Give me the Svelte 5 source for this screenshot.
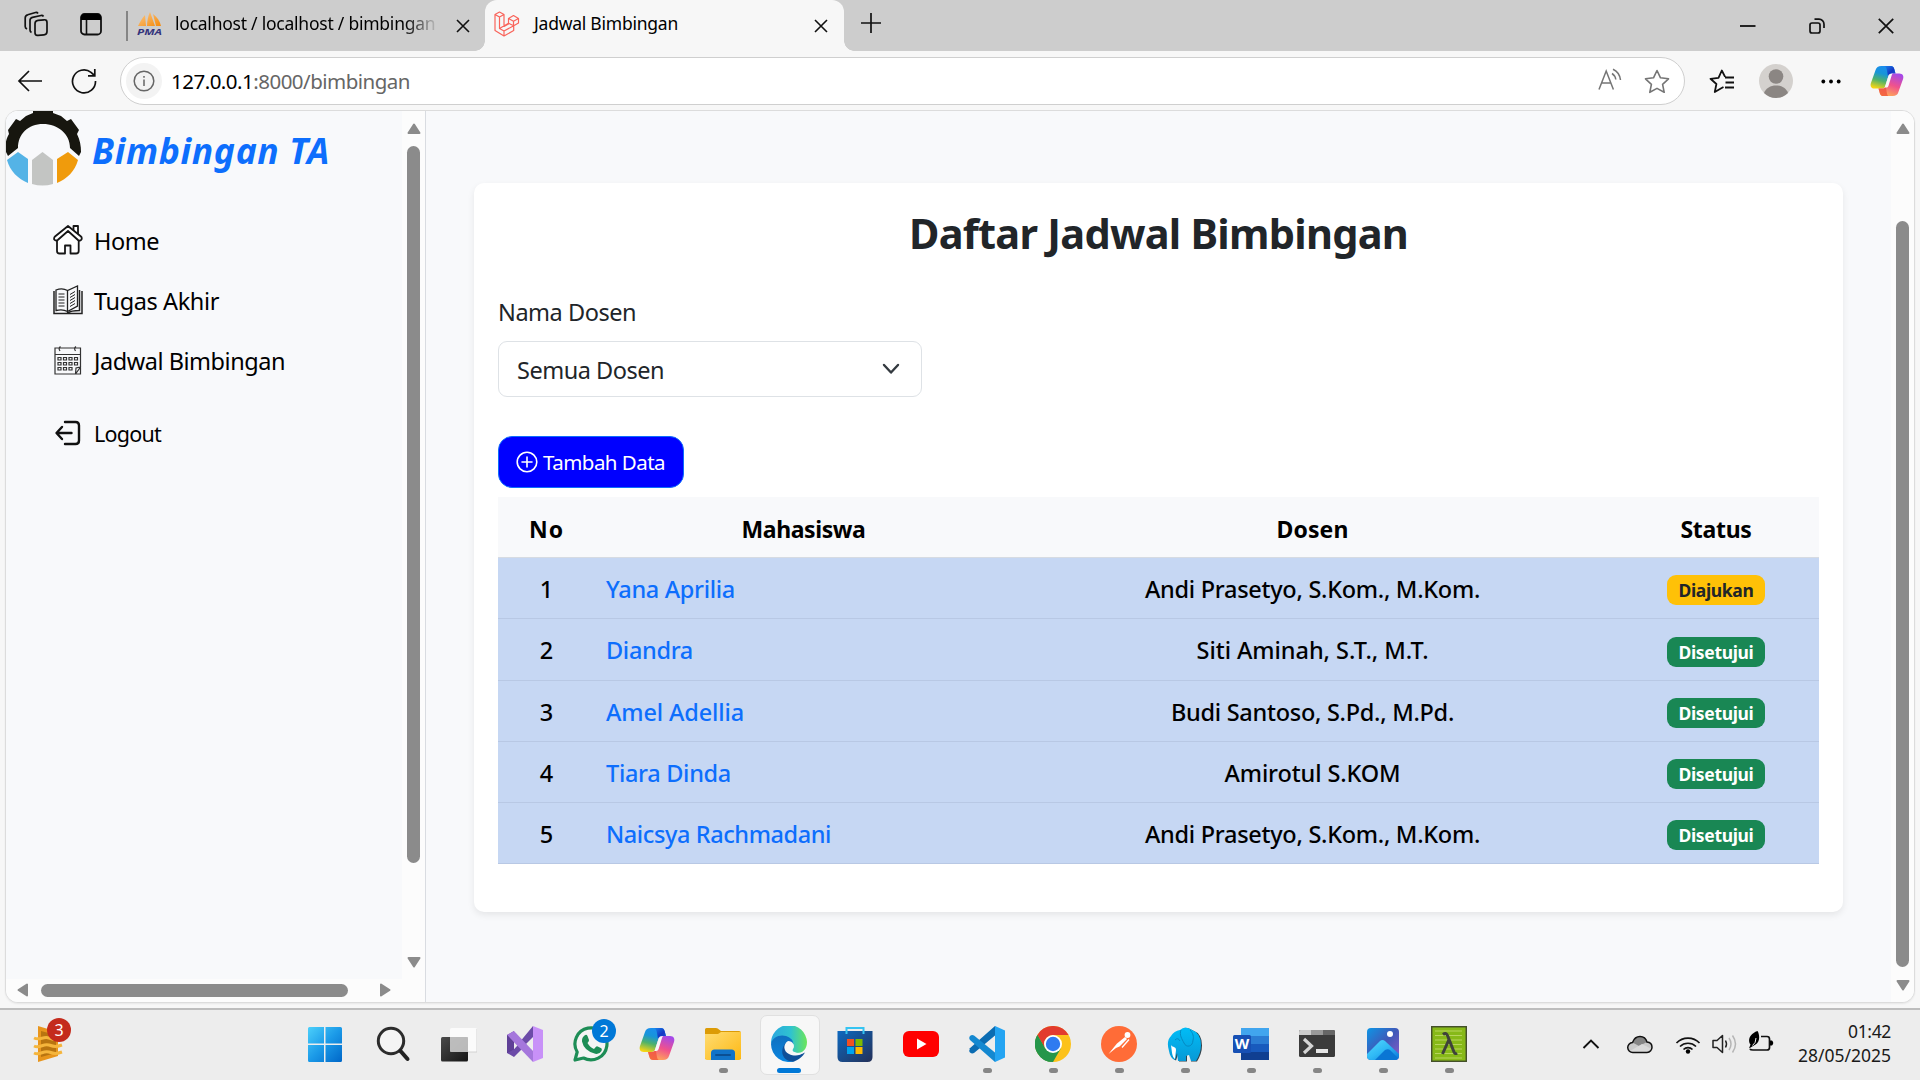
<script>
  const rows = [
    { no: 1, name: 'Yana Aprilia', nw: 129, dosen: 'Andi Prasetyo, S.Kom., M.Kom.', dw: 335, ok: false },
    { no: 2, name: 'Diandra', nw: 87, dosen: 'Siti Aminah, S.T., M.T.', dw: 232, ok: true },
    { no: 3, name: 'Amel Adellia', nw: 138, dosen: 'Budi Santoso, S.Pd., M.Pd.', dw: 283, ok: true },
    { no: 4, name: 'Tiara Dinda', nw: 125, dosen: 'Amirotul S.KOM', dw: 176, ok: true },
    { no: 5, name: 'Naicsya Rachmadani', nw: 225, dosen: 'Andi Prasetyo, S.Kom., M.Kom.', dw: 335, ok: true }
  ];

  const apps = [
    'start', 'search', 'tasks', 'vs', 'whatsapp', 'copilot', 'files', 'edge', 'store',
    'youtube', 'vscode', 'chrome', 'postman', 'elephant', 'word', 'terminal', 'photos', 'lambda'
  ];
  const running = new Set(['files', 'edge', 'vscode', 'chrome', 'postman', 'elephant', 'word', 'terminal', 'photos', 'lambda']);

  // Tracks a line of text so that it takes up the given width.
  function fit(node, width) {
    const n = node.textContent.length;
    const natural = node.getBoundingClientRect().width;
    node.style.letterSpacing = `${(width - natural) / n}px`;
  }
</script>

{#snippet copilot(size)}
  <svg width={size} height={size} viewBox="0 0 36 36">
    <path d="M12 2h10c2 0 3 1 3.600 3l1.400 5h-4c-2 0-3 1-3.600 3l-3 10c-.8 2.200-2 3-4 3H5c-4 0-5-3-4-6L6 6c.8-2.600 2.600-4 6-4z" fill="url(#cpA)" />
    <path d="M17 2h5c2 0 3 1 3.600 3l1.400 5h-4c-2.500 0-3.500 1-4 3l-1-6c-.4-3-1.400-5-4-5z" fill="url(#cpC)" />
    <path d="M24 34H14c-2 0-3-1-3.600-3L9 26h4c2 0 3-1 3.600-3l3-10c.8-2.200 2-3 4-3H31c4 0 5 3 4 6l-5 14c-.8 2.600-2.600 4-6 4z" fill="url(#cpB)" />
    <path d="M9 26h4c2 0 3-1 3.600-3l1 6c.4 3 1 5 3 5h-6.600c-2 0-3-1-3.600-3z" fill="#f0503c" opacity=".75" />
    <path d="M19.600 12.500L15.500 25h1.700q1.800 0 2.400-2L23 12q.3-1.200 1.200-2-3.600 0-4.600 2.500z" fill="#f8f8f8" />
  </svg>
{/snippet}

{#snippet tabClose()}
  <svg width="14" height="14" viewBox="0 0 14 14"><path d="M1 1l12 12M13 1L1 13" class="k" stroke-width="1.600" /></svg>
{/snippet}

{#snippet arrow(dir)}
  <svg class="arrow {dir}" width="14" height="12" viewBox="0 0 14 12"><path d="M7 1.500L12.500 10H1.500z" fill="#8b8b8b" stroke="#8b8b8b" stroke-width="2" stroke-linejoin="round" /></svg>
{/snippet}

<svg class="defs" width="0" height="0">
  <defs>
    <linearGradient id="cpA" x1=".6" y1="0" x2=".3" y2="1"><stop offset="0" stop-color="#1b8df0" /><stop offset=".35" stop-color="#1795d8" /><stop offset=".65" stop-color="#4fb26a" /><stop offset="1" stop-color="#f5d514" /></linearGradient>
    <linearGradient id="cpB" x1=".7" y1="0" x2=".3" y2="1"><stop offset="0" stop-color="#a548e8" /><stop offset=".5" stop-color="#f0528c" /><stop offset="1" stop-color="#ffae54" /></linearGradient>
    <linearGradient id="cpC" x1="0" y1="0" x2="1" y2="1"><stop offset="0" stop-color="#1b8df0" /><stop offset=".6" stop-color="#1437c4" /><stop offset="1" stop-color="#2057d8" /></linearGradient>
    <linearGradient id="win" x1="0" y1="0" x2="1" y2="1"><stop offset="0" stop-color="#4cd0fb" /><stop offset=".5" stop-color="#1b9ae8" /><stop offset="1" stop-color="#0067c8" /></linearGradient>
    <linearGradient id="dark" x1="0" y1="0" x2="1" y2="1"><stop offset="0" stop-color="#4a4a4a" /><stop offset="1" stop-color="#151515" /></linearGradient>
    <linearGradient id="fold" x1="0" y1="0" x2="1" y2="1"><stop offset="0" stop-color="#ffdc72" /><stop offset="1" stop-color="#fdb813" /></linearGradient>
    <linearGradient id="edA" x1="0" y1=".3" x2="1" y2=".3"><stop offset="0" stop-color="#2aa7e0" /><stop offset=".55" stop-color="#2fc3cf" /><stop offset="1" stop-color="#6ce65a" /></linearGradient>
    <linearGradient id="edB" x1="0" y1="0" x2="0" y2="1"><stop offset="0" stop-color="#0f6fbf" /><stop offset="1" stop-color="#0b86e0" /></linearGradient>
    <linearGradient id="bag" x1="0" y1="0" x2="1" y2="1"><stop offset="0" stop-color="#0d69c0" /><stop offset="1" stop-color="#243058" /></linearGradient>
    <linearGradient id="eleph" x1="0" y1="0" x2="0" y2="1"><stop offset="0" stop-color="#00bdf7" /><stop offset="1" stop-color="#0899d6" /></linearGradient>
    <linearGradient id="phA" x1="0" y1="0" x2="1" y2="1"><stop offset="0" stop-color="#0d96e6" /><stop offset=".5" stop-color="#4058b8" /><stop offset="1" stop-color="#8d5ac8" /></linearGradient>
    <linearGradient id="phB" x1="0" y1="0" x2="1" y2="1"><stop offset="0" stop-color="#56d9ff" /><stop offset=".5" stop-color="#2fb8f5" /><stop offset="1" stop-color="#0a74d8" /></linearGradient>
    <linearGradient id="pma" x1="0" y1="0" x2="1" y2="1"><stop offset="0" stop-color="#fbc98a" /><stop offset="1" stop-color="#f58a0b" /></linearGradient>
  </defs>
</svg>

<div class="screen">
  <header class="tabs">
    <div class="lead">
      <svg width="26" height="26" viewBox="0 0 26 26" class="ln" stroke-width="1.700">
        <rect x="12" y="9" width="12" height="15" rx="3" transform="skewY(-6) translate(0 2)" />
        <path d="M8.500 21.500c-1-.5-1.500-1.300-1.500-2.500V9.500c0-1.800.8-2.800 2.500-3.200L18 4.500c1-.2 2 .2 2.500 1" />
        <path d="M4 18c-1-.5-1.800-1.300-1.800-2.500V7c0-1.800.8-2.800 2.500-3.200L12.500 1.500c1-.2 2 .2 2.500 1" />
      </svg>
      <svg width="22" height="23" viewBox="0 0 22 23"><rect x="1" y="1" width="20" height="20.500" rx="3.500" class="ln" stroke-width="1.800" /><path d="M1 7V4.500A3.500 3.500 0 0 1 4.500 1h13A3.500 3.500 0 0 1 21 4.500V7z" /><path d="M6.500 7v14" class="ln" stroke-width="1.600" /></svg>
    </div>
    <div class="tab idle">
      <svg class="fav" width="26" height="26" viewBox="0 0 26 26">
        <path d="M1 15c2-4 4-8 7-11l1 11zM10 15c0-5 1-10 3-14l5 14zM16 3c4 3 7 7 8 12h-5z" fill="url(#pma)" />
        <text x="0" y="24" class="pma" textLength="25" lengthAdjust="spacingAndGlyphs">PMA</text>
      </svg>
      <span class="clip"><span use:fit={271}>localhost / localhost / bimbingan /</span></span>
      {@render tabClose()}
    </div>
    <div class="tab active">
      <svg class="fav" width="26" height="26" viewBox="0 0 26 26" fill="none" stroke="#f9635a" stroke-width="1.200" stroke-linejoin="round">
        <path d="M1 3.500L5.500 1 10 3.500v12l4.500-2.600V7.500L19.500 4.500 24.500 7.500V12l-4.800 2.800v4.800L10 25 1 19.500zM1 3.500L5.500 6 10 3.500M5.500 6v11.500L10 20v5M5.500 17.500l9-5.200 5.200 2.500L10 20M14.500 7.500l5 2.800 5-2.800M19.500 10.300v4.500M10 15.500l4.500-2.600" />
      </svg>
      <span class="name"><span use:fit={144}>Jadwal Bimbingan</span></span>
      {@render tabClose()}
    </div>
    <svg class="plus" width="22" height="22" viewBox="0 0 22 22"><path d="M11 1v20M1 11h20" class="k" stroke-width="1.700" /></svg>
    <div class="win">
      <svg width="16" height="16" viewBox="0 0 16 16"><path d="M0 8h15.500" class="k" stroke-width="1.800" /></svg>
      <svg width="16" height="16" viewBox="0 0 16 16" class="ln" stroke-width="1.700"><rect x="1" y="5" width="10" height="10" rx="2" /><path d="M5.500 1.200H10a5 5 0 0 1 5 5V10" /></svg>
      <svg width="16" height="16" viewBox="0 0 16 16"><path d="M.8.8l14.400 14.400M15.200.8L.8 15.200" class="k" stroke-width="1.700" /></svg>
    </div>
  </header>

  <div class="toolbar">
    <svg class="back" width="26" height="22" viewBox="0 0 26 22"><path d="M12 1L2 11l10 10M2 11h23" class="k" stroke-width="1.700" /></svg>
    <svg class="reload" width="26" height="26" viewBox="0 0 26 26"><path d="M24.500 13A11.500 11.500 0 1 1 20 4.300L23.500 7.500M23.800 1v6.800H17" class="k" stroke-width="1.700" /></svg>
    <div class="url">
      <span class="info"><svg width="22" height="22" viewBox="0 0 22 22" fill="none" stroke="#666" stroke-width="1.500"><circle cx="11" cy="11" r="9.800" /><path d="M11 9.500V16M11 6v1.800" /></svg></span>
      <span class="addr" use:fit={239}>127.0.0.1<i>:8000/bimbingan</i></span>
      <svg class="read" width="24" height="23" viewBox="0 0 24 23" fill="none" stroke="#757575" stroke-width="1.500"><path d="M1 21.500L8.200 3l7.200 18.500M3.500 15h9.500M14 5.500c2 1.300 3.400 3.300 3.800 6M15 1.200c4.200 2 7 5.600 7.500 10.800" /></svg>
      <svg class="star" width="26" height="25" viewBox="0 0 26 25" fill="none" stroke="#757575" stroke-width="1.600" stroke-linejoin="round"><path d="M13 1.500l3.500 7.300 8 1-5.900 5.500 1.600 8L13 19.400l-7.200 3.900 1.600-8L1.500 9.800l8-1z" /></svg>
    </div>
    <svg class="favs" width="26" height="24" viewBox="0 0 26 24"><path d="M14.500 18l-1.800 1-6.900 4 1.600-8L1.500 9.800l8-1L12.800 1.500l3.300 6.300M16 8.500h9M16.500 13.500H25M16 18.500h9" class="k" stroke-width="1.800" stroke-linejoin="round" /></svg>
    <svg class="avatar" width="34" height="34" viewBox="0 0 34 34"><circle cx="17" cy="17" r="17" fill="#d4d1ce" /><circle cx="17" cy="12.500" r="7.300" fill="#8b8683" /><path d="M5 29c2-5 6.500-7.500 12-7.500S27 24 29 29a17 17 0 0 1-24 0z" fill="#8b8683" /></svg>
    <svg class="dots" width="20" height="5" viewBox="0 0 20 5"><circle cx="2.300" cy="2.500" r="1.900" /><circle cx="10" cy="2.500" r="1.900" /><circle cx="17.700" cy="2.500" r="1.900" /></svg>
    {@render copilot(34)}
  </div>

  <div class="page">
    <aside>
      <div class="sidebody">
        <div class="brand">
          <svg width="76" height="76" viewBox="0 0 76 76">
            <path d="M3 46L0 40C0 33 2 27 4 24L3 20 11 9 15 11 21 6 28 3 28 0H48V3L56 6 62 11 66 9 74 20 72 24C75 30 76 36 76 42L74 46 65 38C65 24 53 14 38 14S13 24 13 38z" fill="#17160f" />
            <path d="M2 50L13 42l10 7v24C13 69 5 61 2 50z" fill="#54b3e6" />
            <path d="M27 50L37.500 42 48 50v24a38 38 0 0 1-21 0z" fill="#c3c5c3" />
            <path d="M73 50L63 42 52 49v24c10-4 18-12 21-23z" fill="#f09b0c" />
          </svg>
          <b><span use:fit={238}>Bimbingan TA</span></b>
        </div>
        <nav>
          <div class="item">
            <svg width="30" height="30" viewBox="0 0 30 30" fill="#fff" stroke="#161616" stroke-width="1.800" stroke-linejoin="round"><path d="M20.500 6V1h4.500v10" /><path d="M4 15v11q0 2.500 2.500 2.500H12V20.500h5.500v8H23q2.700 0 2.700-2.500V15L15 5z" /><path d="M1.200 14.500Q.8 12.500 2 11.500L15 1l13 10.500q1.200 1 .5 3-1.500 2-3.500.5L15 6 4.700 15q-2 1.300-3.500-.5z" /></svg>
            <span use:fit={65}>Home</span>
          </div>
          <div class="item">
            <svg width="30" height="30" viewBox="0 0 30 30" fill="none" stroke="#222" stroke-width="1.300"><path d="M3 5C7 3.500 11 3.500 14.500 5.500L24.500 1v20l-10 5.500C11 24.500 7 24.500 3 25.500zM14.500 5.500v23" /><path d="M1 6v22.500h28V6M26.500 5v20.500c-5 0-9 .5-12 2.500" stroke-width="1.500" /><path d="M5.500 9h6M5.500 12h6M5.500 15h6M5.500 18h6M5.500 21h6M17 9.500l5-3M17 12.500l5-3M17 15.500l5-3M17 18.500l5-3M17 21.500l5-3" stroke-width="1" /></svg>
            <span use:fit={125}>Tugas Akhir</span>
          </div>
          <div class="item">
            <svg width="30" height="30" viewBox="0 0 30 30" fill="none" stroke="#333" stroke-width="1.200"><path d="M27.500 22V3H2v26h20.500zM22.500 29l.5-6 4.500-1V29H2M2 9.500h25.500M7 6q-2-3 .5-4.500M22.500 6q-2-3 .5-4.500" /><path d="M5 12.500h3v2.500H5zM10.500 12.500h3v2.500h-3zM16 12.500h3v2.500h-3zM21.500 12.500h3v2.500h-3zM5 17.500h3V20H5zM10.500 17.500h3V20h-3zM16 17.500h3V20h-3zM21.500 17.500h3V20h-3zM5 22.500h3V25H5zM10.500 22.500h3V25h-3zM16 22.500h3V25h-3z" /></svg>
            <span use:fit={191}>Jadwal Bimbingan</span>
          </div>
          <div class="item out">
            <svg width="30" height="30" viewBox="0 0 30 30" fill="none" stroke="#111" stroke-width="2.400" stroke-linecap="round" stroke-linejoin="round"><path d="M12 4h10.500q3.500 0 3.500 3.500v15q0 3.500-3.500 3.500H12M18.500 15H4M9 9l-5.500 6L9 21" /></svg>
            <span use:fit={67}>Logout</span>
          </div>
        </nav>
      </div>
      <div class="vbar">{@render arrow('up')}<div class="thumb"></div>{@render arrow('down')}</div>
      <div class="hbar">{@render arrow('left')}<div class="thumb"></div>{@render arrow('east')}</div>
    </aside>

    <main>
      <section class="card">
        <h2><span use:fit={499}>Daftar Jadwal Bimbingan</span></h2>
        <div class="label"><span use:fit={138}>Nama Dosen</span></div>
        <div class="select">
          <span use:fit={147}>Semua Dosen</span>
          <svg width="18" height="12" viewBox="0 0 18 12"><path d="M2 2l7 7.500L16 2" fill="none" stroke="#343a40" stroke-width="2.400" stroke-linecap="round" stroke-linejoin="round" /></svg>
        </div>
        <div class="button">
          <svg width="22" height="22" viewBox="0 0 22 22" fill="none" stroke="#fff" stroke-width="1.600"><circle cx="11" cy="11" r="9.800" /><path d="M11 6v10M6 11h10" stroke-linecap="round" /></svg>
          <span use:fit={122}>Tambah Data</span>
        </div>
        <div class="table">
          <div class="row head">
            <div><span use:fit={35}>No</span></div>
            <div><span use:fit={124}>Mahasiswa</span></div>
            <div><span use:fit={72}>Dosen</span></div>
            <div><span use:fit={71}>Status</span></div>
          </div>
          {#each rows as r}
            <div class="row">
              <div>{r.no}</div>
              <div class="link"><span use:fit={r.nw}>{r.name}</span></div>
              <div><span use:fit={r.dw}>{r.dosen}</span></div>
              <div><span class="badge" class:ok={r.ok}><span use:fit={75}>{r.ok ? 'Disetujui' : 'Diajukan'}</span></span></div>
            </div>
          {/each}
        </div>
      </section>
    </main>
    <div class="vbar right">{@render arrow('up')}<div class="thumb"></div>{@render arrow('down')}</div>
  </div>

  <footer>
    <div class="widget">
      <svg width="36" height="38" viewBox="0 0 36 38"><path d="M6 1l20 6v24L6 37z" fill="#e8951c" /><path d="M9 6l15 4v18L9 32z" fill="#b87410" /><path d="M2 13c6 3 9-2 15 0s7 2 11 0M2 21c6 3 9-3 15-1s7 2 13 0M2 28c6 3 9-3 15-1s7 2 13 0" fill="none" stroke="#f5b53c" stroke-width="3" /></svg>
      <span class="count red">3</span>
    </div>
    <div class="apps">
      {#each apps as app}
        <div class="app" class:first={app === 'start'} class:run={running.has(app)} class:current={app === 'edge'}>
          {#if app === 'copilot'}
            {@render copilot(36)}
          {:else}
            <svg width="36" height="36" viewBox="0 0 36 36">
              {#if app === 'start'}
                <path d="M2.500 1H17v16.500H1V2.500Q1 1 2.500 1zM18.500 1h15q1.500 0 1.500 1.500v15H18.500zM1 19h16v17H2.500Q1 36 1 34.500zM18.500 19H35v15.500q0 1.500-1.500 1.500h-15z" fill="url(#win)" />
              {:else if app === 'search'}
                <circle cx="16" cy="15" r="12.700" fill="#f4f4f4" stroke="#2c2c2c" stroke-width="3" /><path d="M25.500 25l7 8" stroke="#222" stroke-width="4" stroke-linecap="round" />
              {:else if app === 'tasks'}
                <rect x="0" y="11" width="27" height="24.500" rx="1.500" fill="url(#dark)" /><rect x="9" y="2" width="27" height="24" rx="1.500" fill="#fff" opacity=".78" /><path d="M9 11h18v15H9z" fill="#aaa" opacity=".55" /><path d="M27 26h9V3" fill="none" stroke="#d2d2d2" />
              {:else if app === 'vs'}
                <path d="M26 0v12L7 31l-7-4V9l7-4v18z" fill="#6c4ba8" /><path d="M0 9l7 5v9l-7 4z" fill="#5a3b8c" /><path d="M7 14v9l4.500-4.500z" fill="#ededed" /><path d="M26 11v14l-7-7z" fill="#ededed" /><path d="M0 9l7-4 19 20v11z" fill="#a577dc" /><path d="M0 9v18l7-4v-6z" fill="#5f4097" /><path d="M26 0l10 4v28l-10 4z" fill="#c891f8" />
              {:else if app === 'whatsapp'}
                <path d="M2 34l2.200-8A16 16 0 1 1 10.500 32z" fill="#f4f4f4" stroke="#1d8d56" stroke-width="3.200" stroke-linejoin="round" /><path d="M11.500 9.500q2-1.500 3 .5l1.500 4q.3 1-1.500 3 2.500 4.500 6.500 6l2-2.300q.8-.8 1.700-.2l3.600 1.800q1 .8.200 2.700-2 3.500-6.200 2.800Q11 25 9 15.500q-.3-4 2.500-6z" fill="#1d8d56" />
              {:else if app === 'files'}
                <path d="M0 3.500Q0 2 1.500 2H11q2 0 3 1.500L16 5h18q2 0 2 2v26H0z" fill="#dc9b06" /><path d="M0 8h13l3-2h20v26q0 2-2 2H2q-2 0-2-2z" fill="url(#fold)" /><path d="M6 34v-7q0-3.500 3.500-3.500h17q3.500 0 3.500 3.500v7z" fill="#1173c8" /><path d="M11 29h14" stroke="#0b4f93" stroke-width="2" stroke-linecap="round" />
              {:else if app === 'edge'}
                <path d="M0 18A18 18 0 0 1 36 16c0 8-5 11-10 11-4 0-6-2-4-4 2-3 0-9-6-9C8 13 1 14 0 18z" fill="url(#edA)" /><path d="M0 18C1 11 9 8 15 10c6 2 8 6 7 9-3-4-8-2-8 4 0 7 5 12 10 12A18 18 0 0 1 0 18z" fill="url(#edB)" /><path d="M15 17c-5 4-7 17 7 18.800C28 34 32 30 34 26.500c-6 3.500-19 3-19-9.500z" fill="#0f4f98" /><path d="M17 15c-5 3-5 10 1 13 5 2.500 11 2 15-1.500-5 1.800-14-.5-11-4 2-3 0-7.500-5-7.500z" fill="#f7f7f7" />
              {:else if app === 'store'}
                <path d="M.5 5h35v26q0 5-5 5h-25q-5 0-5-5z" fill="url(#bag)" /><path d="M10 13h7v7h-7z" fill="#f25022" /><path d="M18.500 13h7v7h-7z" fill="#7fba00" /><path d="M10 21h7v7h-7z" fill="#00a4ef" /><path d="M18.500 21h7v7h-7z" fill="#ffb900" /><path d="M9.500 8V2h17v6" fill="none" stroke="#35c4f2" stroke-width="2" />
              {:else if app === 'youtube'}
                <rect y="5" width="36" height="26" rx="6" fill="#f00" /><path d="M14 12.500v11l9.500-5.500z" fill="#fff" />
              {:else if app === 'vscode'}
                <path d="M0 23l26-23 3 7L5 27q-2 1-4-.5-1.500-2 0-3.500z" fill="#0b6cb2" /><path d="M1 10q2-1.800 4-.5L29 29l-3 7L1 14q-1.500-2 0-4z" fill="#1488d0" /><path d="M26 0l10 4.500v27L26 36z" fill="#24a4f2" />
              {:else if app === 'chrome'}
                <circle cx="18" cy="18" r="18" fill="#fcc21b" /><path d="M2.400 9A18 18 0 0 0 18 36l7.800-13.500L10.200 22.500z" fill="#25964a" /><path d="M2.400 9A18 18 0 0 1 33.600 9H18a9 9 0 0 0-8.600 7l.8 6.500z" fill="#e23b2e" /><path d="M2.400 9L10.200 22.500 18 27v9A18 18 0 0 1 2.400 9z" fill="#25964a" /><circle cx="18" cy="18" r="9" fill="#fff" /><circle cx="18" cy="18" r="7.200" fill="#2f7bf0" />
              {:else if app === 'postman'}
                <circle cx="18" cy="18" r="18" fill="#ff6c37" /><circle cx="26.500" cy="9" r="2.900" fill="#fff" /><path d="M24 11l-8 6.500-2.500 3L7.500 28 15 22l3.500-1.500L26 13z" fill="#fff" /><path d="M28 13.500l-7 8" stroke="#fff" stroke-width="1.400" />
              {:else if app === 'elephant'}
                <path d="M13 4q5-5 12 0 9 3 9 15 0 8-5 16h-6v-8h-4v8h-8l-1-7-2 6q-5-2-6-9-3-10 2-15 3-5 9-6z" fill="#32424c" transform="translate(1 .5)" /><path d="M13 4q5-5 12 0 9 3 9 15 0 8-5 16h-5l-2-6-3 1v5h-8l-1-8-2 7q-5-2-6-9-3-10 2-15 3-5 9-6z" fill="url(#eleph)" /><path d="M14 4c-2 5 1 9 3 13 2 5 9 4 9-3 1-3 0-7-3-10M8 14q3-3 5 1" fill="none" stroke="#0489c2" /><path d="M4 19c2 3 5 1 5 5l-1 9c-3-2-3-7-4-14z" fill="#fff" />
              {:else if app === 'word'}
                <path d="M8 2h28v9H8z" fill="#41a5ee" /><path d="M8 10h28v8H8z" fill="#2b7cd3" /><path d="M8 18h28v8H8z" fill="#185abd" /><path d="M8 26h28v8H8z" fill="#103f91" /><rect x="0" y="9" width="18" height="18" rx="1.500" fill="#1750b4" /><text x="9" y="22.500" class="wd">W</text>
              {:else if app === 'terminal'}
                <rect y="4" width="36" height="27" rx="1.500" fill="#3b3b3b" /><path d="M0 9V5.500Q0 4 1.500 4H12v5z" fill="#ccc" /><path d="M12 4h12v5H12z" fill="#999" /><path d="M24 4h10.500Q36 4 36 5.500V9H24z" fill="#666" /><path d="M5 13l7.500 7-7.500 7" fill="none" stroke="#d5d5d5" stroke-width="3.200" /><path d="M17 23h12v4H17z" fill="#e6e6e6" />
              {:else if app === 'photos'}
                <rect x="2" y="2" width="32" height="32" rx="4" fill="url(#phA)" /><path d="M2 28l13-13q2.500-2 5 0l14 13v2q0 4-4 4H6q-4 0-4-4z" fill="url(#phB)" /><path d="M10 34l10-10q3-1.500 5 0l8 8q-1 2-4 2z" fill="#0a76d4" /><circle cx="25" cy="8" r="3" fill="#fff" />
              {:else}
                <rect x=".7" y=".7" width="34.600" height="34.600" fill="#87b918" stroke="#44502a" stroke-width="1.500" /><path d="M4 5h27M4 9.500h27M4 14h27M4 18.500h27M4 23h27M4 27.500h27M4 32h27" stroke="#b7d55d" stroke-width="1.200" /><path d="M12 8.500q3-2.500 4.500 1L23 26q1 2.500 3 1M17.800 14L11.500 28" fill="none" stroke="#3f423a" stroke-width="3" />
              {/if}
            </svg>
          {/if}
          {#if app === 'whatsapp'}<span class="count blue">2</span>{/if}
        </div>
      {/each}
    </div>
    <div class="tray">
      <svg class="chev" width="18" height="12" viewBox="0 0 18 12"><path d="M1.500 10L9 2.500l7.500 7.500" class="k" stroke-width="1.900" /></svg>
      <svg class="cloud" width="26" height="19" viewBox="0 0 26 19"><path d="M6 17.500a5 5 0 0 1-.5-10C7 3.500 10 1.500 13 1.500s6 2 7 5.500c3 .3 5 2.500 5 5.200s-2 5.300-5 5.300z" fill="#c9c9c9" /><path d="M5.500 7.500C7 3.500 10 1.500 13 1.500s6 2 7 5.500L12 11z" fill="#858585" /><path d="M3 16l12-7 9.500 5c-1 2.500-2.500 3.500-4.500 3.500H6z" fill="#d9d9d9" /><path d="M6 17.500a5 5 0 0 1-.5-10C7 3.500 10 1.500 13 1.500s6 2 7 5.500c3 .3 5 2.500 5 5.200s-2 5.300-5 5.300z" class="k" stroke-width="1.500" /></svg>
      <svg class="wifi" width="26" height="19" viewBox="0 0 26 19"><path d="M1.500 8a16 16 0 0 1 23 0M5 11.500a11.500 11.500 0 0 1 16 0M8.500 14.500a6.500 6.500 0 0 1 9 0" class="k" stroke-width="1.700" /><circle cx="13" cy="16.500" r="2.200" /></svg>
      <svg class="vol" width="26" height="20" viewBox="0 0 26 20" fill="none" stroke="#222" stroke-width="1.500"><path d="M1 6.500h4L10.500 1.500v17L5 13.500H1zM13.500 6.500q2 3.500 0 7" stroke-linejoin="round" /><path d="M17 4q4 6 0 12M20.500 1.500q6 8.500 0 17" stroke="#b5b5b5" /></svg>
      <svg class="bat" width="26" height="21" viewBox="0 0 26 21"><path d="M13 5.500h6q2.500 0 2.500 2.500v8.500q0 2.500-2.500 2.500H5q-2.500 0-3-1" class="k" stroke-width="1.700" /><path d="M22 9.500h2q2.500 2.500 0 5h-2z" /><path d="M9.500 0c2.500 4 2.500 11-2 13.500L1 17.500l1.500-4C-.5 10 1 3 9.500 0z" /><path d="M8 7q0 5-3.500 7.500" stroke="#ededed" stroke-width="1" fill="none" /></svg>
      <div class="clock"><span use:fit={43}>01:42</span><span use:fit={93}>28/05/2025</span></div>
    </div>
  </footer>
</div>

<style>
  :global(body) { margin: 0; overflow: hidden; }
  .defs { position: absolute; }
  .screen { width: 1920px; height: 1080px; display: flex; flex-direction: column; background: #f7f7f7; font-family: "Noto Sans", "Open Sans", sans-serif; color: #000; overflow: hidden; }
  .screen * { box-sizing: border-box; }
  svg { display: block; flex: none; }
  span { white-space: pre; }
  .k { fill: none; stroke: #111; }
  .ln { fill: none; stroke: #111; }

  .tabs { height: 51px; background: #cdcdcd; display: flex; align-items: stretch; font-size: 17.500px; flex: none; }
  .lead { width: 128px; display: flex; align-items: center; gap: 31px; padding: 0 0 3px 23px; position: relative; }
  .lead::after { content: ""; position: absolute; right: 0; top: 11px; width: 2px; height: 30px; background: #858585; }
  .tab { display: flex; align-items: center; }
  .idle { width: 357px; padding: 0 15px 0 9px; border-bottom-right-radius: 9px; }
  .fav { margin-bottom: 3px; }
  .clip { width: 264px; margin: 0 auto 5px 12px; overflow: hidden; -webkit-mask-image: linear-gradient(90deg, #000 87%, transparent); mask-image: linear-gradient(90deg, #000 87%, transparent); }
  .active { width: 359px; padding: 0 16px 0 9px; background: #f7f7f7; border-radius: 12px 12px 0 0; position: relative; }
  .active::before, .active::after { content: ""; position: absolute; bottom: 0; width: 10px; height: 10px; }
  .active::before { right: 100%; background: radial-gradient(circle at 0 0, transparent 9.500px, #f7f7f7 10px); }
  .active::after { left: 100%; background: radial-gradient(circle at 100% 0, transparent 9.500px, #f7f7f7 10px); }
  .name { margin: 0 auto 5px 14px; }
  .pma { font: italic 700 9.500px "Open Sans", sans-serif; fill: #34347c; }
  .wd { font: 700 15px "Open Sans", sans-serif; fill: #fff; text-anchor: middle; }
  .plus { margin: 12px 0 0 16px; }
  .win { margin-left: auto; display: flex; gap: 53px; align-items: center; padding-right: 26px; }

  .toolbar { height: 59px; display: flex; align-items: center; padding: 1px 16px 0 17px; flex: none; }
  .reload { margin-left: 28px; }
  .url { margin-left: 23px; width: 1565px; height: 48px; border: 1.500px solid #cfcfcf; border-radius: 24px; background: #fff; display: flex; align-items: center; padding: 0 14px 0 5px; }
  .info { width: 36px; height: 36px; border-radius: 50%; background: #f3f3f3; display: grid; place-items: center; margin-right: 9px; }
  .addr { font-size: 20.500px; margin-bottom: 1px; }
  .addr i { font-style: normal; color: #666; }
  .read { margin-left: auto; margin-bottom: 4px; }
  .star { margin-left: 22px; }
  .favs { margin-left: 24px; }
  .avatar { margin-left: 24px; }
  .dots { margin: 0 29px 0 28px; }

  .page { height: 893px; margin: 0 5px; border: 1px solid #dcdcdc; border-radius: 13px; overflow: hidden; background: #f8f9fb; display: flex; flex: none; box-shadow: 0 1px 2px #0001; }
  aside { width: 420px; height: 100%; border-right: 1px solid #d9dce1; display: grid; grid-template: 868px 1fr / 396px 1fr; background: #fcfcfc; flex: none; }
  .sidebody { background: #f8f9fb; overflow: hidden; }
  .brand { display: flex; gap: 11px; height: 83px; margin: -1px 0 0 -1px; }
  .brand b { font-size: 35.500px; line-height: 40px; margin-top: 20px; font-style: italic; color: #0d6efd; }
  nav { padding: 18px 0 0 47px; font-size: 23.500px; }
  .item { display: flex; align-items: center; height: 60px; gap: 11px; padding-bottom: 3px; }
  .item span { padding-top: 2px; }
  .out { margin-top: 13px; font-size: 21.500px; }
  .vbar { display: flex; flex-direction: column; align-items: center; padding-top: 12px; width: 23px; background: #fcfcfc; }
  .vbar .thumb { width: 13px; height: 717px; margin: 11px 0 93px; border-radius: 7px; background: #8b8b8b; flex: none; }
  .right { margin-left: auto; }
  .right .thumb { height: 746px; margin: 86px 0 12px; }
  .hbar { display: flex; align-items: center; padding: 0 0 1px 10px; }
  .hbar .thumb { width: 307px; height: 13px; margin: 0 30px 0 11px; border-radius: 7px; background: #8b8b8b; }
  .down { transform: rotate(180deg); }
  .left { transform: rotate(-90deg); }
  .east { transform: rotate(90deg); }

  main { padding: 72px 0 0 48px; }
  .card { width: 1369px; height: 729px; background: #fff; border-radius: 10px; box-shadow: 0 3px 7px rgba(0, 0, 0, .08); padding: 22px 24px 0; }
  h2 { margin: 0; text-align: center; font-size: 41.500px; line-height: 56px; font-weight: 700; color: #212529; }
  .label { margin-top: 33px; font-size: 23.500px; line-height: 36px; color: #212529; }
  .select { margin-top: 11px; width: 424px; height: 56px; border: 1.500px solid #dee2e6; border-radius: 9px; display: flex; align-items: center; justify-content: space-between; padding: 2px 21px 0 18px; font-size: 23.500px; color: #212529; }
  .select svg { margin-bottom: 3px; }
  .button { margin-top: 39px; width: 186px; height: 52px; border: 1.500px solid #0d6efd; border-radius: 14px; background: #00f; color: #fff; display: flex; align-items: center; gap: 5px; padding: 0 17px; font-size: 20.500px; }
  .table { margin-top: 9px; width: 1321px; font-size: 23.500px; font-weight: 500; }
  .row { display: grid; grid-template-columns: 96px 418px 600px 207px; height: 61.250px; align-items: center; text-align: center; background: #c6d7f3; border-bottom: 1px solid #b8c8e4; line-height: 36px; }
  .row > div { padding: 2px 11px 0 12px; }
  .head { height: 61px; background: #f8f9fb; font-weight: 700; font-size: 23px; border-bottom-color: #d6dbe2; }
  .head > div { padding-top: 3px; }
  .row > .link { text-align: left; color: #0d6efd; }
  .badge { display: inline-grid; place-items: center; width: 98px; height: 30px; border-radius: 9px; background: #ffc107; color: #212529; font-size: 17.500px; font-weight: 700; line-height: 30px; vertical-align: middle; margin-bottom: 2px; }
  .ok { background: #198754; color: #fff; }

  footer { margin-top: 5px; height: 72px; border-top: 2px solid #bdbdbd; background: #ededed; display: flex; flex: none; }
  .widget { width: 292px; padding: 15px 0 0 32px; position: relative; }
  .count { position: absolute; width: 24px; height: 24px; border-radius: 50%; color: #fff; font-size: 16px; line-height: 24px; text-align: center; }
  .red { left: 47px; top: 8px; background: #c42b1c; }
  .blue { left: 34px; top: 9px; background: #0078d7; }
  .apps { display: flex; }
  .app { width: 66px; height: 70px; display: flex; justify-content: center; padding-top: 16px; position: relative; }
  .first { margin-right: 2px; }
  .app svg { position: relative; }
  .run::after { content: ""; position: absolute; bottom: 7px; width: 9px; height: 5px; border-radius: 3px; background: #868686; }
  .current::before { content: ""; position: absolute; left: 4px; top: 5px; width: 58px; height: 58px; border-radius: 7px; background: #f7f7f7; border: 1px solid #e0e0e0; }
  .current::after { width: 24px; background: #0078d7; }
  .tray { margin-left: auto; padding: 0 29px 2px 0; display: flex; align-items: center; }
  .chev { margin-right: 1px; }
  .cloud { margin-left: 26px; }
  .wifi { margin-left: 22px; }
  .vol { margin-left: 11px; margin-bottom: 1px; }
  .bat { margin: 0 0 6px 10px; }
  .clock { width: 117px; display: flex; flex-direction: column; align-items: flex-end; font-size: 17.500px; line-height: 24px; color: #1a1a1a; margin-bottom: 2px; }
</style>
